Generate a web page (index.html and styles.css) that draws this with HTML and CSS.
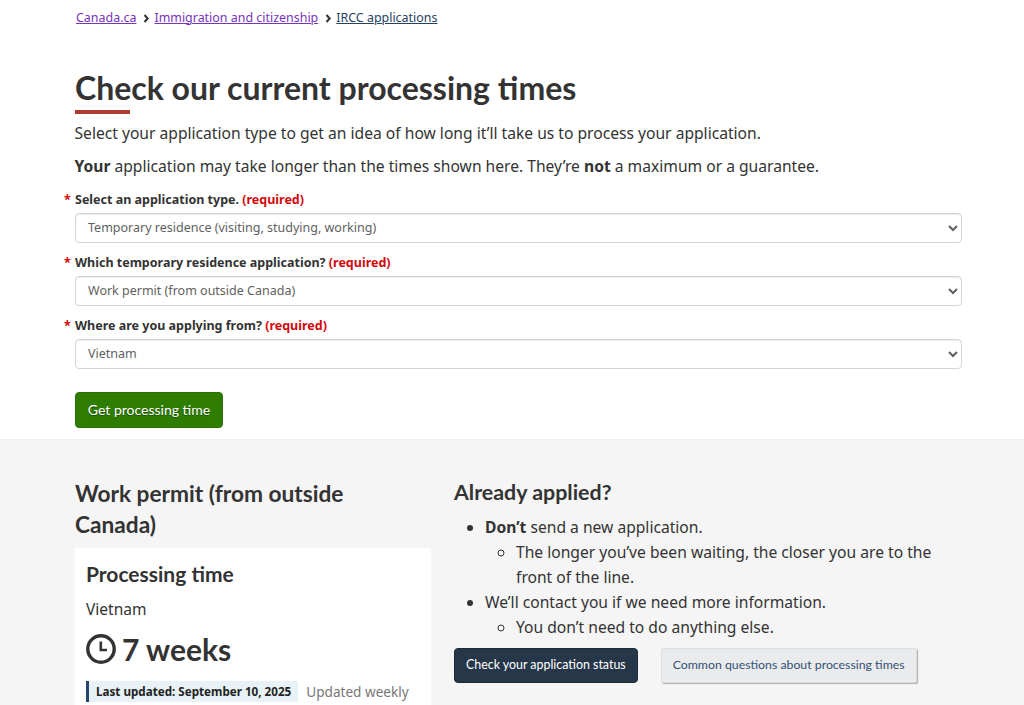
FILE: index.html
```html
<!DOCTYPE html>
<html lang="en">
<head>
  <meta charset="UTF-8" />
  <meta name="viewport" content="width=device-width, initial-scale=1" />
  <title>Check our current processing times</title>
  <link rel="stylesheet" href="styles.css">
</head>
<body>
  <nav class="breadcrumb">
    <a href="#">Canada.ca</a>
    <span class="crumb-sep"><svg width="7" height="9" viewBox="0 0 7 9"><path d="M1.5 1l3.2 3.5L1.5 8" fill="none" stroke="#333" stroke-width="2"/></svg></span>
    <a href="#">Immigration and citizenship</a>
    <span class="crumb-sep"><svg width="7" height="9" viewBox="0 0 7 9"><path d="M1.5 1l3.2 3.5L1.5 8" fill="none" stroke="#333" stroke-width="2"/></svg></span>
    <a class="current" href="#">IRCC applications</a>
  </nav>

  <main class="top">
    <h1>Check our current processing times</h1>
    <p class="lead">Select your application type to get an idea of how long it’ll take us to process your application.</p>
    <p class="lead"><strong>Your</strong> application may take longer than the times shown here. They’re <strong>not</strong> a maximum or a guarantee.</p>

    <form class="form">
      <div class="field">
        <label for="type"><span class="star">*</span> Select an application type. <span class="req">(required)</span></label>
        <select id="type"><option>Temporary residence (visiting, studying, working)</option></select>
      </div>
      <div class="field">
        <label for="which"><span class="star">*</span> Which temporary residence application? <span class="req">(required)</span></label>
        <select id="which"><option>Work permit (from outside Canada)</option></select>
      </div>
      <div class="field">
        <label for="from"><span class="star">*</span> Where are you applying from? <span class="req">(required)</span></label>
        <select id="from"><option>Vietnam</option></select>
      </div>
      <button class="btn btn-green" type="button">Get processing time</button>
    </form>
  </main>

  <section class="results">
    <div class="results-left">
      <h2 class="permit">Work permit (from outside Canada)</h2>
      <div class="card">
        <h3>Processing time</h3>
        <p class="country">Vietnam</p>
        <p class="time">
          <svg width="30" height="30" viewBox="0 0 30 30"><circle cx="15" cy="15" r="13.2" fill="none" stroke="#333" stroke-width="3.4"/><path d="M14.8 7.5V16H21" fill="none" stroke="#333" stroke-width="2.6"/></svg>
          7 weeks
        </p>
        <p class="updated"><strong class="updated-tag">Last updated: September 10, 2025</strong><span class="weekly">Updated weekly</span></p>
      </div>
    </div>
    <div class="results-right">
      <h2 class="applied">Already applied?</h2>
      <ul class="info">
        <li><strong>Don’t</strong> send a new application.
          <ul><li>The longer you’ve been waiting, the closer you are to the front of the line.</li></ul>
        </li>
        <li>We’ll contact you if we need more information.
          <ul><li>You don’t need to do anything else.</li></ul>
        </li>
      </ul>
      <div class="actions">
        <a class="btn btn-navy" href="#">Check your application status</a>
        <a class="btn btn-grey" href="#">Common questions about processing times</a>
      </div>
    </div>
  </section>
</body>
</html>
```

FILE: styles.css
```css
body {
  margin: 0;
  background: #fff;
  color: #333;
  font-family: 'Noto Sans', sans-serif;
  font-size: 15.63px;
}
.breadcrumb {
  padding: 8px 0 0 76px;
  height: 31px;
  display: flex;
  align-items: flex-start;
  font-size: 12.45px;
  line-height: 20px;
}
.breadcrumb a {
  color: #7834bc;
  text-decoration-thickness: 1px;
}
.breadcrumb a.current {
  color: #284162;
}
.crumb-sep {
  margin: 0 4px 0 7px;
  display: flex;
  align-items: center;
  height: 20px;
}
.top {
  padding: 0 62px 0 75px;
}
h1 {
  font-family: 'Lato', sans-serif;
  font-weight: 700;
  font-size: 32px;
  line-height: 36px;
  margin: 0;
  padding: 31px 0 8px;
  position: relative;
}
h1::after {
  content: "";
  position: absolute;
  left: 0;
  bottom: 0;
  width: 55px;
  height: 4px;
  background: #af3c2f;
}
.lead {
  margin: 0 0 10px -0.5px;
  line-height: 23px;
}
.lead:first-of-type {
  margin-top: 8px;
}
.form {
  margin-top: 11.5px;
}
.field {
  margin-bottom: 10px;
}
.field label {
  display: block;
  font-size: 12.5px;
  font-weight: 700;
  line-height: 20px;
  margin-bottom: 3px;
  position: relative;
}
.star {
  position: absolute;
  left: -11px;
  color: #d3080c;
}
.req {
  color: #d3080c;
}
select {
  display: block;
  width: 100%;
  height: 30px;
  padding: 4px 8px;
  font-family: 'Noto Sans', sans-serif;
  font-size: 12.5px;
  color: #5f5f5f;
  background: #fff;
  border: 1px solid #d4d4d4;
  border-radius: 4px;
  box-shadow: inset 0 1px 1px rgba(0,0,0,.075);
}
.btn {
  display: inline-block;
  font-family: 'Lato', sans-serif;
  font-size: 14px;
  line-height: 20px;
  padding: 8px 12px;
  border-radius: 4px;
  border: 1px solid transparent;
  text-decoration: none;
}
.btn-green {
  margin-top: 13px;
  background: #2f7d00;
  border-color: #2b6e02;
  color: #fff;
  text-shadow: 0 1px 1px #1a4a00;
  height: 36px;
  width: 148px;
  padding: 0;
  text-align: center;
}
.results {
  margin-top: 11px;
  background: #f5f5f5;
  box-shadow: inset 0 1px 2px rgba(0,0,0,.03);
  padding: 39px 62px 20px 75px;
  display: grid;
  grid-template-columns: 356px 1fr;
  column-gap: 23px;
}
h2 {
  font-family: 'Lato', sans-serif;
  font-weight: 700;
  font-size: 22.7px;
  line-height: 31px;
  margin: 0;
}
.permit {
  padding-right: 40px;
}
.applied {
  font-size: 21.4px;
  line-height: 28px;
  margin-bottom: 9px;
  color: #333;
}
.card {
  margin-top: 8px;
  background: #fff;
  padding: 12px 11px 16px;
}
h3 {
  font-family: 'Lato', sans-serif;
  font-weight: 700;
  font-size: 21px;
  line-height: 28px;
  margin: 0 0 10px;
}
.country {
  margin: 0;
  font-size: 15.5px;
  line-height: 22px;
}
.time {
  margin: 10px 0 13px;
  font-family: 'Lato', sans-serif;
  font-weight: 700;
  font-size: 30px;
  line-height: 38px;
  display: flex;
  align-items: center;
  gap: 6px;
}
.updated {
  margin: 0;
  display: flex;
  align-items: center;
  gap: 8px;
  white-space: nowrap;
}
.updated-tag {
  font-size: 11.65px;
  line-height: 21px;
  background: #e8f2f6;
  border-left: 3px solid #26476b;
  padding: 0 7px;
  color: #222;
}
.weekly {
  font-size: 13.6px;
  color: #777;
}
.info {
  margin: 0;
  padding: 0 0 0 31px;
  line-height: 25px;
}
.info ul {
  margin: 0;
  padding: 0 0 0 31px;
  list-style: circle;
}
.actions {
  margin-top: 8px;
  display: flex;
  gap: 23px;
}
.btn-navy {
  background: #26374a;
  border-color: #1c2a3a;
  color: #fff;
  font-size: 12.4px;
  padding: 6.5px 11px;
}
.btn-grey {
  background: #eaebed;
  border-color: #dcdee1;
  color: #335075;
  font-size: 12.3px;
  padding: 6.5px 11px;
  border-radius: 2px;
  box-shadow: 1px 1px 1px rgba(0,0,0,.3);
}
```
